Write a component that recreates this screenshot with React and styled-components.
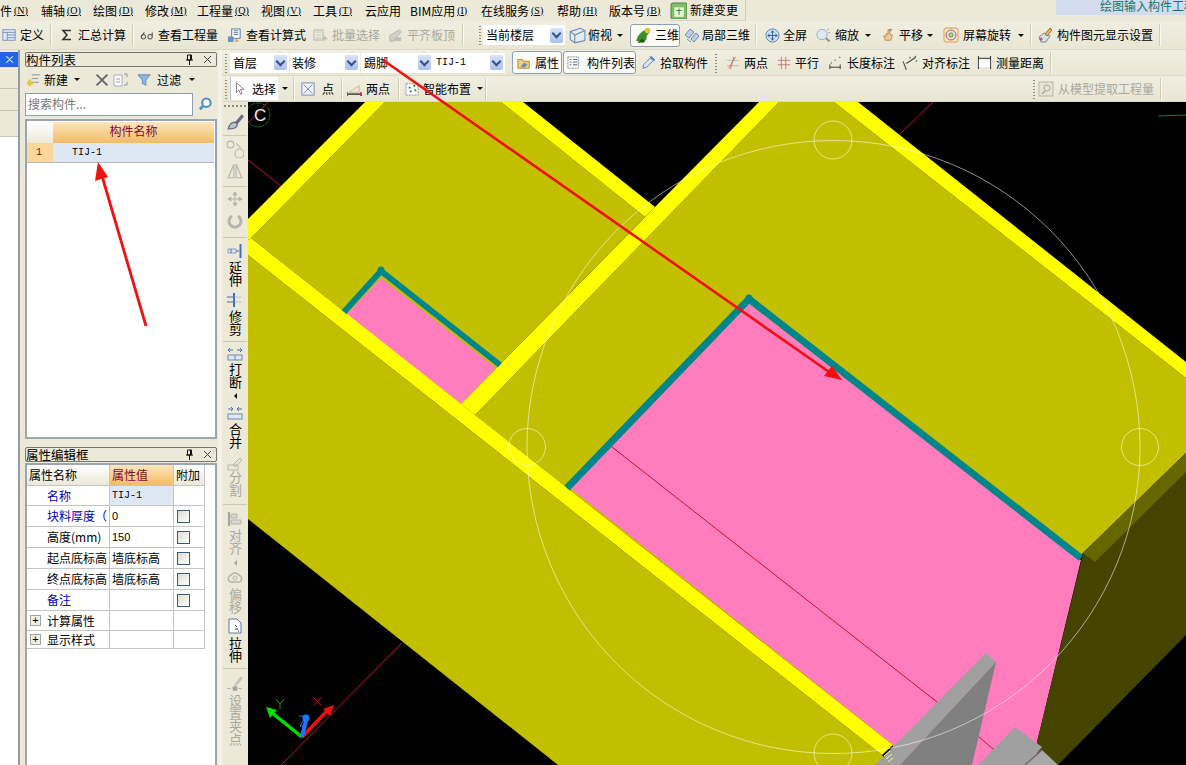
import { Fragment } from "react";
import styled, { createGlobalStyle } from "styled-components";

const GlobalStyle = createGlobalStyle`
  html, body {
    margin: 0;
    padding: 0;
    background: #ece9d8;
    overflow: hidden;
  }
  * { box-sizing: border-box; }
`;

const Page = styled.div`
  position: relative;
  width: 1186px;
  height: 765px;
  overflow: hidden;
  background: #ece9d8;
  color: #000;
  font: 12px/16px "Noto Sans CJK SC", "Liberation Sans", sans-serif;
  white-space: nowrap;
`;
const MenuBar = styled.div`
  height: 21px;
  display: flex;
  align-items: center;
  background: #ece9d8;
`;
const MenuItem = styled.div`
  width: ${p => p.$w}px;
  flex: none;
  display: flex;
  align-items: center;
  height: 19px;
  & u {
    font-size: 10px;
    margin-left: 2px;
    font-family: "Liberation Serif", serif;
  }
`;
const ChangeBtn = styled.div`
  width: 76px;
  height: 21px;
  display: flex;
  align-items: center;
  gap: 3px;
  border-right: 1px solid #cfccb8;
  border-bottom: 1px solid #d8d5c2;
`;
const TitleHint = styled.div`
  margin-left: auto;
  width: 130px;
  height: 15px;
  align-self: flex-start;
  background: #d3dcee;
  color: #0c7a6a;
  padding-left: 44px;
  line-height: 11px;
  overflow: hidden;
`;
const ToolRow = styled.div`
  height: ${p => p.$h || 26}px;
  display: flex;
  align-items: center;
  background: linear-gradient(#f0eee0, #e9e6d4);
  border-bottom: 1px solid #dcd9c6;
`;
const Tool = styled.div`
  width: ${p => p.$w}px;
  flex: none;
  height: 23px;
  display: flex;
  align-items: center;
  padding-left: ${p => p.$pl || 4}px;
  gap: ${p => p.$gap || 4}px;
  color: ${p => (p.$off ? "#a9a8a0" : "#000")};
  & svg { flex: none; }
`;
const ToggleTool = styled(Tool)`
  background: #fbfaf4;
  border: 1px solid #8ba0b4;
  border-radius: 3px;
`;
const WhiteTool = styled(Tool)`
  background: #fff;
  border-left: 1px solid #b8c4d0;
`;
const Caret = styled.i`
  width: 0;
  height: 0;
  margin-left: auto;
  margin-right: ${p => p.$mr || 6}px;
  border-left: 3px solid transparent;
  border-right: 3px solid transparent;
  border-top: 3px solid #111;
`;
const InlineCaret = styled.i`
  width: 0;
  height: 0;
  margin-left: ${p => p.$ml ?? 3}px;
  border-left: 3px solid transparent;
  border-right: 3px solid transparent;
  border-top: 3px solid #111;
`;
const Sep = styled.div`
  width: 2px;
  height: 22px;
  flex: none;
  border-left: 1px solid #cfccb8;
  border-right: 1px solid #fbfaf2;
`;
const Grip = styled.div`
  width: ${p => p.$w || 8}px;
  height: 20px;
  flex: none;
  background: radial-gradient(circle, #8d8b7c 0.8px, transparent 1px) 2px 0 / 4px 3px repeat-y;
`;
const Spacer = styled.div`
  width: ${p => p.$w}px;
  flex: none;
`;
const PanelGap = styled.div`
  height: 8px;
  flex: none;
`;
const Combo = styled.div`
  width: ${p => p.$w}px;
  height: 20px;
  flex: none;
  margin-right: ${p => p.$mr || 0}px;
  background: #fff;
  display: flex;
  align-items: center;
  padding-left: ${p => p.$pl || 3}px;
  position: relative;
  font-family: ${p => (p.$mono ? '"Liberation Mono", monospace' : "inherit")};
  font-size: ${p => (p.$mono ? "10px" : "12px")};
`;
const ComboArrow = styled.span`
  margin-left: auto;
  margin-right: 2px;
  width: 13px;
  height: 15px;
  border-radius: 2px;
  background: linear-gradient(#d9e4f8, #a9bfea);
  display: flex;
  align-items: center;
  justify-content: center;
  &::after {
    content: "";
    width: 5px;
    height: 5px;
    margin-top: -3px;
    border-right: 2px solid #37508c;
    border-bottom: 2px solid #37508c;
    transform: rotate(45deg);
  }
`;
const Body = styled.div`
  height: 715px;
  display: flex;
`;
const LeftStrip = styled.div`
  width: 20px;
  flex: none;
  padding-top: 2px;
  border-right: 2px solid #8f9ea8;
  display: flex;
  flex-direction: column;
`;
const StripTab = styled.div`
  height: 15px;
  background: #1f66e0;
  color: #fff;
  font-size: 11px;
  line-height: 14px;
  text-align: right;
  padding-right: 3px;
`;
const StripRow = styled.div`
  height: ${p => p.$h}px;
  border-bottom: 1px solid #c9c6b2;
`;
const StripFill = styled.div`
  flex: 1;
  background: #fff;
`;
const Side = styled.div`
  width: 194px;
  flex: none;
  margin-left: 4px;
  padding: 2px 0 0 0;
  display: flex;
  flex-direction: column;
`;
const PanelTitle = styled.div`
  height: 15px;
  flex: none;
  display: flex;
  align-items: center;
  margin-left: 1px;
  margin-right: 1px;
  border: 1px solid #77786c;
  border-radius: 2px;
  font-size: 12.5px;
  padding-right: 4px;
`;
const TitleBtn = styled.span`
  margin-left: ${p => (p.$first ? "auto" : "9px")};
  width: 9px;
  display: flex;
  justify-content: center;
`;
const MiniBar = styled.div`
  height: 25px;
  flex: none;
  display: flex;
  align-items: center;
`;
const SearchRow = styled.div`
  height: 25px;
  flex: none;
  display: flex;
  align-items: center;
  gap: 5px;
`;
const SearchBox = styled.div`
  width: 168px;
  height: 23px;
  margin-left: 1px;
  background: #fff;
  border: 1px solid #8ea0ae;
  color: #777;
  padding-left: 2px;
  line-height: 20px;
`;
const ListFrame = styled.div`
  height: 320px;
  flex: none;
  margin: 2px 1px 0 1px;
  border: 2px solid #9aa7b0;
  background: #fff;
  padding: 1px 1px 0 0;
`;
const ListHead = styled.div`
  display: grid;
  grid-template-columns: 26px 1fr;
  height: 21px;
`;
const CornerCell = styled.div`
  background: linear-gradient(#fff, #ece9d8);
`;
const OrangeHead = styled.div`
  background: linear-gradient(#fbe6bd, #f5bb66);
  color: #7c0a2e;
  text-align: center;
  line-height: 18px;
  font-size: 12px;
`;
const ListRow = styled.div`
  display: grid;
  grid-template-columns: 26px 1fr;
  height: 20px;
  border-bottom: 1px solid #b4b8ba;
`;
const IndexCell = styled.div`
  background: #fbd79c;
  color: #7c0a2e;
  font: 10px/19px "Liberation Mono", monospace;
  padding-left: 9px;
`;
const NameCell = styled.div`
  background: #dee8f5;
  font: 10px/19px "Liberation Mono", monospace;
  padding-left: 19px;
`;
const PropFrame = styled.div`
  flex: 1;
  margin: 1px 1px 0 1px;
  border-left: 2px solid #9aa7b0;
  border-right: 2px solid #9aa7b0;
  border-top: 2px solid #9aa7b0;
  background: #fff;
`;
const PropGrid = styled.div`
  width: 178px;
  display: grid;
  grid-template-columns: 83px 64px 31px;
`;
const fontFor = kind => {
  if (kind === "mono") return '10px "Liberation Mono", monospace';
  if (kind === "num") return '11px "Liberation Sans", sans-serif';
  return 'inherit';
};
const Cell = styled.div`
  height: ${p => p.$h || 21}px;
  border-bottom: 1px solid #c4c4c0;
  border-right: 1px solid #c4c4c0;
  display: flex;
  align-items: center;
  padding-left: ${p => p.$pl || 2}px;
  color: ${p => p.$color || "#000"};
  background: ${p => p.$bg || "transparent"};
  font: ${p => fontFor(p.$font)};
`;
const HeadCell = styled(Cell)`
  background: linear-gradient(#fff, #ece9d8);
`;
const HeadValue = styled(Cell)`
  background: linear-gradient(#fbe6bd, #f5bb66);
  color: #7c0a2e;
`;
const Check = styled.span`
  width: 13px;
  height: 13px;
  margin-left: 1px;
  border: 1px solid #2f5f80;
  background: linear-gradient(135deg, #dcdcd2, #fff);
`;
const Plus = styled.span`
  width: 11px;
  height: 11px;
  margin-right: 6px;
  border: 1px solid #a5a5a0;
  background: #f1efe4;
  font: 11px/9px "Liberation Sans", sans-serif;
  text-align: center;
`;
const Gutter = styled.div`
  width: 4px;
  flex: none;
  background: #f4f2e8;
`;
const Work = styled.div`
  flex: 1;
  display: flex;
  flex-direction: column;
  min-width: 0;
`;
const Stage = styled.div`
  height: 663px;
  display: flex;
`;
const VBar = styled.div`
  width: 26px;
  flex: none;
  display: flex;
  flex-direction: column;
  align-items: center;
  background: #ece9d8;
`;
const VGrip = styled.div`
  width: 24px;
  height: 8px;
  flex: none;
  background: radial-gradient(circle, #8d8b7c 0.8px, transparent 1px) 0 2px / 4px 4px repeat-x;
`;
const VIcon = styled.div`
  height: ${p => p.$h}px;
  margin-top: ${p => p.$mt || 0}px;
  flex: none;
  display: flex;
  align-items: center;
  justify-content: center;
`;
const VSep = styled.div`
  width: 24px;
  height: 1px;
  flex: none;
  background: #cbc8b5;
  margin: ${p => p.$t || 3}px 0 ${p => p.$b || 2}px;
`;
const VLabel = styled.div`
  writing-mode: vertical-rl;
  text-orientation: upright;
  font-size: 13px;
  line-height: 16px;
  height: ${p => p.$h || 25}px;
  flex: none;
  margin-top: -1px;
  margin-bottom: 1px;
  color: ${p => (p.$off ? "#a9a8a0" : "#000")};
`;
const VCaret = styled.i`
  height: ${p => p.$h}px;
  flex: none;
  display: flex;
  align-items: flex-start;
  &::after {
    content: "";
    margin-top: 1px;
    border-top: 3px solid transparent;
    border-bottom: 3px solid transparent;
    border-right: 3px solid ${p => (p.$off ? "#a9a8a0" : "#111")};
  }
`;
const Canvas = styled.svg`
  display: block;
  width: 938px;
  height: 663px;
  flex: none;
  background: #000;
`;
const Overlay = styled.svg`
  position: absolute;
  left: 0;
  top: 0;
  width: 1186px;
  height: 765px;
  pointer-events: none;
`;

const Box = ({ size = 16, children }) => (
  <svg width={size} height={size} viewBox="0 0 16 16">
    {children}
  </svg>
);

const GridIco = () => (
  <Box size={14}>
    <rect x="1" y="2" width="14" height="12" fill="#dfe8f5" stroke="#6f8fb5" />
    <path d="M1 5h14M6 5v9M6 8h9M6 11h9" stroke="#6f8fb5" />
  </Box>
);
const Sigma = () => (
  <svg width="14" height="14" viewBox="0 0 14 14">
    <path d="M11 2.5H3l4 4.5-4 4.5h8" fill="none" stroke="#333" strokeWidth="1.6" />
  </svg>
);
const Glasses = () => (
  <Box size={14}>
    <path d="M1.5 10a2.5 2.5 0 1 0 5 0 2.5 2.5 0 1 0-5 0zM1.5 10L5 5M9 10a2.5 2.5 0 1 0 5 0 2.5 2.5 0 1 0-5 0zM14 10V5" fill="none" stroke="#555" strokeWidth="1.2" />
  </Box>
);
const CalcIco = () => (
  <Box size={15}>
    <rect x="5" y="1" width="9" height="10" fill="#fff" stroke="#4d78ad" />
    <path d="M7 3h5M7 5h5M7 7h5" stroke="#4d78ad" />
    <rect x="1" y="9" width="6" height="6" fill="#6f93c3" />
    <path d="M9 11l4 3-4 1z" fill="#e39b3c" />
  </Box>
);
const BatchIco = () => (
  <Box>
    <rect x="1" y="3" width="9" height="10" fill="none" stroke="#b5b5ad" />
    <path d="M3 5h5M3 8h5M3 11h5" stroke="#c5c5bd" />
    <path d="M10 8l5 4-3 .5-1 2.5z" fill="#bdbdb5" />
  </Box>
);
const LevelIco = () => (
  <Box size={15}>
    <path d="M2 8l10-6 2 2-8 10H2z" fill="#d0d0c8" stroke="#b5b5ad" />
    <rect x="7" y="10" width="7" height="4" fill="#bdbdb5" />
  </Box>
);
const CubeIco = () => (
  <Box size={18}>
    <path d="M2 5l9-3 4 2v9l-9 2-4-3z" fill="#e4edf6" stroke="#6d8eae" />
    <path d="M2 5l4 3 9-4M6 8v7" fill="none" stroke="#6d8eae" />
  </Box>
);
const ThreeDIco = () => (
  <Box size={18}>
    <path d="M2 13c2-6 5-9 10-10l2 3c-2 1-3 3-3 6l-3 3z" fill="#3d8f2b" />
    <circle cx="12" cy="4" r="2.5" fill="#e4c437" />
    <path d="M3 15l4-4 3 3z" fill="#1e5c16" />
  </Box>
);
const LocalIco = () => (
  <Box>
    <path d="M1 8l5-6 4 3-5 6zM7 12l5-6 3 3-5 6z" fill="#bcd0e6" stroke="#6d8eae" />
    <path d="M3 12l4 3" stroke="#6d8eae" />
  </Box>
);
const FullIco = () => (
  <Box size={15}>
    <circle cx="8" cy="8" r="7" fill="#cfe0f3" stroke="#5b82ae" />
    <path d="M8 3v10M3 8h10M8 3L6.5 5M8 3l1.5 2M8 13l-1.5-2M8 13l1.5-2M3 8l2-1.5M3 8l2 1.5M13 8l-2-1.5M13 8l-2 1.5" stroke="#2e5f96" fill="none" />
  </Box>
);
const ZoomIco = () => (
  <Box size={15}>
    <circle cx="6.5" cy="7" r="5.5" fill="#dde8f5" stroke="#95abc2" />
    <path d="M10.5 11l4 3" stroke="#8a8a80" strokeWidth="2" />
    <path d="M12 2l2-1M13 5h2" stroke="#9a9a90" />
  </Box>
);
const HandIco = () => (
  <Box size={14}>
    <path d="M3 9l2 5h6l2-6-3-1V2H8v5L6 6v3z" fill="#f0c890" stroke="#b58a50" />
    <path d="M11 1v3M9.5 2.5L11 1l1.5 1.5" stroke="#777" fill="none" />
  </Box>
);
const SpinIco = () => (
  <Box>
    <rect x="1" y="1" width="14" height="14" rx="2" fill="#fbe9c9" stroke="#d89b59" />
    <circle cx="8" cy="8" r="5" fill="#d7e6f4" stroke="#c65a5a" />
    <circle cx="8" cy="8" r="2" fill="#e9d56a" stroke="#6a8a3a" />
  </Box>
);
const GemIco = () => (
  <Box>
    <path d="M2 10l5-4 6 3-4 6H4z" fill="#d5dde6" stroke="#7b8794" />
    <path d="M8 7l5-6 2 2-5 6z" fill="#e7b45c" stroke="#99753a" />
    <circle cx="4" cy="12" r="1.5" fill="#c55" />
  </Box>
);
const PropIco = () => (
  <Box size={14}>
    <path d="M1 4h5l1 2h7v8H1z" fill="#f0cf78" stroke="#a8843a" />
    <path d="M4 12l4-4 4 1-3 4z" fill="#6a8fbc" />
  </Box>
);
const ListIco = () => (
  <Box size={14}>
    <rect x="1" y="1" width="12" height="13" fill="none" stroke="#7a8a9a" strokeDasharray="2 1" />
    <path d="M3 4h2M3 7h2M3 10h2M7 4h5M7 7h5M7 10h5" stroke="#36597f" />
  </Box>
);
const DropIco = () => (
  <Box size={15}>
    <path d="M2 14l1-4 7-7 3 3-7 7z" fill="#dbe8f6" stroke="#5b82ae" />
    <path d="M9 2l2-1 4 4-1 2z" fill="#5b82ae" />
  </Box>
);
const CrossIco = () => (
  <Box size={14}>
    <path d="M1 5h14M1 11h14" stroke="#b8b8ae" />
    <path d="M5 15L9 1M3 14l8-13" stroke="#c77070" />
  </Box>
);
const ParaIco = () => (
  <Box size={14}>
    <path d="M1 5h14M1 10h14M5 1v14M10 1v14" stroke="#c77070" />
  </Box>
);
const LenIco = () => (
  <Box size={15}>
    <path d="M2 10v5M13 10v5M2 13h11" stroke="#333" />
    <path d="M3 9l1-1M7 6l1-1M12 3l1-1" stroke="#5d8a5d" strokeWidth="1.5" />
  </Box>
);
const AlignDimIco = () => (
  <Box size={17}>
    <path d="M2 7l3 8M5 9l9-6" stroke="#444" fill="none" />
    <path d="M8 4l1-1M13 2l1 1M14 6l1 1" stroke="#5d8a5d" strokeWidth="1.5" />
  </Box>
);
const RulerIco = () => (
  <Box size={15}>
    <path d="M1.5 1v14M14.5 1v14" stroke="#222" />
    <rect x="2" y="5" width="12" height="8" fill="#fff" />
    <path d="M2 3.5h12" stroke="#222" />
  </Box>
);
const PointerIco = () => (
  <Box size={13}>
    <path d="M3 1v12l3-3 2 5 2-1-2-5h4z" fill="#fff" stroke="#667" />
  </Box>
);
const PointIco = () => (
  <Box size={14}>
    <rect x="1" y="1" width="14" height="14" fill="#eef2fa" stroke="#7084b0" />
    <path d="M3 3l10 10M13 3L3 13" stroke="#7084b0" />
  </Box>
);
const SegIco = () => (
  <Box size={15}>
    <path d="M2 12L13 5v7z" fill="#f3e6d2" stroke="#c9b79c" />
    <path d="M0 14h15" stroke="#333" strokeWidth="1.5" />
    <path d="M0 12v4M15 12v4" stroke="#b33" strokeWidth="2" />
  </Box>
);
const SmartIco = () => (
  <Box size={15}>
    <rect x="1" y="3" width="13" height="12" fill="#fff" stroke="#888" strokeDasharray="2 1" />
    <path d="M4 7h2M9 5h2M5 11h2M10 10h2" stroke="#2f7a3a" strokeWidth="2" />
  </Box>
);
const ExtractIco = () => (
  <Box>
    <rect x="1" y="1" width="14" height="14" fill="#e6e3d4" stroke="#b7b5a9" />
    <circle cx="9" cy="7" r="3" fill="none" stroke="#aaa89c" />
    <path d="M7 10l-3 3" stroke="#aaa89c" strokeWidth="1.5" />
  </Box>
);
const NewIco = () => (
  <Box size={15}>
    <path d="M6 3h9M6 7h7M6 11h8" stroke="#7f93ad" />
    <path d="M4 8v7M1 11.5h7" stroke="#e7c34d" strokeWidth="3" />
  </Box>
);
const CopyIco = () => (
  <Box>
    <path d="M1 3h8v11H1z" fill="#fff" stroke="#aab" />
    <path d="M11 2h3v3M11 13h3v-3M3 7h4M3 10h4" stroke="#8a97a8" fill="none" />
  </Box>
);
const FilterIco = () => (
  <Box size={14}>
    <path d="M0 2h14L9 8v6L5 12V8z" fill="#8fb6e0" stroke="#5b82ae" />
  </Box>
);
const SearchIco = () => (
  <Box size={15}>
    <circle cx="9" cy="6" r="4.5" fill="#fff" stroke="#4b8fc9" strokeWidth="2.2" />
    <path d="M5.5 9.5L2 13" stroke="#4b8fc9" strokeWidth="3" />
  </Box>
);
const PinIco = () => (
  <svg width="9" height="11" viewBox="0 0 9 11">
    <path d="M2.5 1h4v5h-4zM1 6h7M4.5 6v5M5.5 1v5" stroke="#111" fill="none" />
  </svg>
);
const CloseIco = ({ size = 9, color = "#444", width = 1 }) => (
  <svg width={size} height={size} viewBox="0 0 9 9">
    <path d="M1 1l7 7M8 1L1 8" stroke={color} strokeWidth={width} />
  </svg>
);
const BookIco = () => (
  <Box size={17}>
    <rect x="1" y="1" width="15" height="15" rx="2" fill="#7fbf6a" stroke="#4d8a3e" />
    <rect x="4" y="5" width="9" height="9" fill="#e6f3d8" />
    <path d="M6 8h5M8.5 6v6" stroke="#3f8a3a" />
  </Box>
);

const BrushV = () => (
  <Box size={18}>
    <path d="M2 15c1-4 3-6 6-6l2 2c0 3-3 4-8 4z" fill="#b9c3dc" stroke="#667" />
    <path d="M8 9l6-7 2 2-6 7z" fill="#6a6a8a" />
  </Box>
);
const ScatterV = () => (
  <Box size={18}>
    <circle cx="4" cy="4" r="3" fill="none" stroke="#b5b5ad" />
    <circle cx="12" cy="12" r="4" fill="none" stroke="#b5b5ad" />
    <path d="M9 3l4 4" stroke="#b5b5ad" />
  </Box>
);
const MirrorV = () => (
  <Box size={18}>
    <path d="M7 2L2 14h5zM9 2l5 12H9z" fill="none" stroke="#b5b5ad" />
  </Box>
);
const MoveV = () => (
  <Box size={16}>
    <path d="M8 1v14M1 8h14M8 1L6 4h4zM8 15l-2-3h4zM1 8l3-2v4zM15 8l-3-2v4z" fill="#b5b5ad" stroke="#b5b5ad" />
  </Box>
);
const RotateV = () => (
  <Box size={16}>
    <path d="M5 3a6 6 0 1 0 6 0" fill="none" stroke="#b5b5ad" strokeWidth="3" />
  </Box>
);
const ExtendV = () => (
  <Box size={16}>
    <path d="M13.5 1v14" stroke="#4570b5" strokeWidth="2" />
    <path d="M1 6h8v4H1z" fill="#dfe7f3" stroke="#8aa0c0" />
    <path d="M4 6v4M9 8h3" stroke="#4570b5" />
  </Box>
);
const TrimV = () => (
  <Box size={16}>
    <path d="M7 1v14" stroke="#4570b5" strokeWidth="2" />
    <path d="M0 5h6M0 10h6" stroke="#4570b5" />
    <path d="M9 5h6M9 10h6" stroke="#a8b5cc" strokeDasharray="2 1" />
  </Box>
);
const BreakV = () => (
  <Box size={16}>
    <path d="M1 4h5M15 4h-5M1 4l2-2M1 4l2 2M15 4l-2-2M15 4l-2 2" stroke="#4570b5" fill="none" />
    <rect x="1" y="9" width="14" height="5" fill="#dfe7f3" stroke="#6c8ab5" />
    <path d="M8 9v5" stroke="#6c8ab5" />
  </Box>
);
const MergeV = () => (
  <Box size={16}>
    <path d="M1 4h5M15 4h-5M6 4L4 2M6 4L4 6M10 4l2-2M10 4l2 2" stroke="#4570b5" fill="none" />
    <rect x="1" y="9" width="14" height="5" fill="#dfe7f3" stroke="#6c8ab5" />
  </Box>
);
const SplitV = () => (
  <Box size={16}>
    <path d="M1 9h10v5H1zM6 9l7-7 2 2-7 7z" fill="none" stroke="#b5b5ad" />
  </Box>
);
const AlignV = () => (
  <Box size={16}>
    <path d="M2 1v14" stroke="#a5a59d" strokeWidth="2" />
    <path d="M4 3h6v4H4zM4 9h10v4H4z" fill="#d8d8d0" stroke="#b5b5ad" />
  </Box>
);
const OffsetV = () => (
  <Box size={16}>
    <path d="M3 13a4 4 0 0 1 1-7 5 5 0 0 1 8 0 4 4 0 0 1 1 7z" fill="none" stroke="#b5b5ad" strokeWidth="1.5" />
    <circle cx="8" cy="9" r="2" fill="none" stroke="#b5b5ad" />
  </Box>
);
const StretchV = () => (
  <Box size={16}>
    <path d="M2 1h8l4 4v10H2z" fill="#fff" stroke="#5c7ca8" />
    <path d="M8 7l2 2M8 11h3M11 13h1" stroke="#333" />
  </Box>
);
const GripV = () => (
  <Box size={18}>
    <path d="M1 12h14" stroke="#b5b5ad" strokeDasharray="3 2" />
    <rect x="6" y="10" width="4" height="4" fill="#a5a59d" />
    <path d="M7 9l6-8 2 2-6 7z" fill="#c5c5bd" />
  </Box>
);

const menus = [
  ["件", "N", 41],
  ["辅轴", "O", 52],
  ["绘图", "D", 52],
  ["修改", "M", 52],
  ["工程量", "Q", 64],
  ["视图", "V", 52],
  ["工具", "T", 52],
  ["云应用", "", 45],
  ["BIM应用", "I", 71],
  ["在线服务", "S", 76],
  ["帮助", "H", 52],
  ["版本号", "B", 61],
];

const props = [
  { name: "名称", color: "#0000b0", value: "TIJ-1", font: "mono", bg: "#dee8f5", h: 20 },
  { name: "块料厚度（", color: "#0000b0", value: "0", font: "num", check: true },
  { name: "高度(mm)", value: "150", font: "num", check: true },
  { name: "起点底标高", value: "墙底标高", check: true },
  { name: "终点底标高", value: "墙底标高", check: true },
  { name: "备注", color: "#0000b0", value: "", check: true },
];

// scene coordinates are the screen coordinates of the photographed page
const Scene = () => (
  <Canvas viewBox="248 102 938 663">
    <polygon points="251,238 385,102 501,102 645,217 461,404" fill="#c2bf00" />
    <polygon points="475,415 779,102 834,102 1186,378 1186,453 1083,553 893,745" fill="#c2bf00" />
    <polygon points="248,255 882,755 888,765 558,765 248,519" fill="#c2bf00" />

    <polygon points="748,303 1081,560 1037,742 1037,765 895,765 893,745 570,488" fill="#ff7dbd" />
    <polygon points="381,278 496,368 461,404 346,315" fill="#ff7dbd" />

    <polygon points="248,219 365,102 385,102 251,238 248,240" fill="#ffff00" />
    <polygon points="501,102 523,102 655,207 645,217" fill="#ffff00" />
    <polygon points="655,207 759,102 779,102 475,415 461,404" fill="#ffff00" />
    <polygon points="834,102 858,102 1186,362 1186,378" fill="#ffff00" />
    <polygon points="248,240 251,238 893,745 882,755 248,255" fill="#ffff00" />

    <polyline points="344,312 381,271 500,365" fill="none" stroke="#00868a" strokeWidth="6" />
    <polyline points="567,488 749,299 1081,558" fill="none" stroke="#00868a" strokeWidth="7" />
    <circle cx="381" cy="270" r="3.5" fill="#00868a" />
    <circle cx="749" cy="298" r="3.5" fill="#00868a" />

    <polygon points="1083,553 1186,453 1186,635 1058,765 1037,765 1037,742 1081,562" fill="#444400" />
    <polygon points="1083,553 1186,453 1186,472 1095,562" fill="#666600" />

    <g fill="none" stroke="#c8102e" strokeWidth="1">
      <line x1="612" y1="447" x2="937" y2="702" />
      <line x1="978" y1="736" x2="1000" y2="755" />
      <line x1="402" y1="643" x2="281" y2="765" />
      <line x1="248" y1="160" x2="281" y2="186" />
      <line x1="268" y1="102" x2="248" y2="123" />
      <line x1="933" y1="102" x2="899" y2="135" />
    </g>

    <polygon points="986,653 996,662 900,765 875,765" fill="#a0a0a0" />
    <polygon points="996,662 972,765 900,765" fill="#808080" />
    <polygon points="1015,727 1042,747 1027,765 978,765" fill="#a0a0a0" />
    <polygon points="1042,750 1058,765 1027,765" fill="#a8a8a8" />
    <line x1="1042" y1="750" x2="1025" y2="765" stroke="#707070" strokeWidth="1.5" />

    <g fill="none" stroke="#fff" strokeOpacity="0.55" strokeWidth="1">
      <circle cx="833.5" cy="447" r="306.5" />
      <circle cx="833" cy="140" r="19" />
      <circle cx="527" cy="447" r="18.5" />
      <circle cx="1140" cy="447" r="18.5" />
      <circle cx="833" cy="753" r="19" />
    </g>
    <path d="M884 756l6-5M886 759l6-5M888 762l5-4" stroke="#ffff80" strokeWidth="1" />

    <circle cx="258" cy="115" r="12" fill="none" stroke="#0c6a34" strokeWidth="1" strokeDasharray="5 1" />
    <text x="254" y="121" fill="#eee" fontSize="17" fontFamily="Liberation Sans, sans-serif">C</text>
    <line x1="1158" y1="116" x2="1186" y2="115" stroke="#0c7a40" />

    <line x1="302" y1="737" x2="271" y2="712" stroke="#00e000" strokeWidth="3.5" />
    <polygon points="266,707 277,710 270,718" fill="#00e000" />
    <line x1="302" y1="737" x2="328" y2="710" stroke="#f01010" strokeWidth="3.5" />
    <polygon points="334,705 330,716 323,709" fill="#f01010" />
    <line x1="302" y1="737" x2="306" y2="720" stroke="#1e78ff" strokeWidth="4" />
    <circle cx="306" cy="718" r="3.5" fill="#1e78ff" />
    <path d="M299 716h7l-6 10h6" fill="none" stroke="#1e78ff" />
    <path d="M276 699l4 5 4-5M280 704v5" fill="none" stroke="#1f9a2f" />
    <path d="M313 697l9 9M322 697l-9 9" fill="none" stroke="#a01818" />
  </Canvas>
);

const App = () => {
  return (
    <>
      <GlobalStyle />
      <Page>
        <MenuBar>
          {menus.map(([label, key, w]) => (
            <MenuItem key={label} $w={w}>
              {label}
              {key && <u>({key})</u>}
            </MenuItem>
          ))}
          <ChangeBtn>
            <BookIco />
            新建变更
          </ChangeBtn>
          <TitleHint>绘图输入构件工程</TitleHint>
        </MenuBar>

        <ToolRow $h={29}>
          <Tool $w={50} $pl={2}><GridIco />定义</Tool>
          <Sep />
          <Tool $w={80} $pl={8}><Sigma />汇总计算</Tool>
          <Sep />
          <Tool $w={90} $pl={6}><Glasses />查看工程量</Tool>
          <Tool $w={86} $pl={3}><CalcIco />查看计算式</Tool>
          <Tool $w={75} $pl={3} $gap={3} $off><BatchIco />批量选择</Tool>
          <Tool $w={77} $pl={3} $off><LevelIco />平齐板顶</Tool>
          <Sep />
          <Spacer $w={12} />
          <Grip $w={7} />
          <Combo $w={82}>当前楼层<ComboArrow /></Combo>
          <Tool $w={64} $pl={3} $gap={2}><CubeIco />俯视<Caret /></Tool>
          <Spacer $w={1} />
          <ToggleTool $w={50} $pl={3} $gap={3}><ThreeDIco />三维</ToggleTool>
          <Spacer $w={1} />
          <Tool $w={74} $pl={3} $gap={2}><LocalIco />局部三维</Tool>
          <Sep />
          <Spacer $w={2} />
          <Tool $w={52} $pl={6} $gap={3}><FullIco />全屏</Tool>
          <Tool $w={66} $pl={5}><ZoomIco />缩放<Caret /></Tool>
          <Tool $w={62} $pl={4}><HandIco />平移<Caret /></Tool>
          <Tool $w={91} $pl={4}><SpinIco />屏幕旋转<Caret /></Tool>
          <Sep />
          <Tool $w={127} $pl={5}><GemIco />构件图元显示设置</Tool>
          <Sep />
        </ToolRow>

        <Body>
          <LeftStrip>
            <StripTab>×</StripTab>
            <StripRow $h={22} />
            <StripRow $h={22} />
            <StripRow $h={26} />
            <StripFill />
          </LeftStrip>
          <Side>
            <PanelTitle>
              构件列表
              <TitleBtn $first><PinIco /></TitleBtn>
              <TitleBtn><CloseIco /></TitleBtn>
            </PanelTitle>
            <MiniBar>
              <Tool $w={67} $pl={2} $gap={3}><NewIco />新建<InlineCaret /></Tool>
              <Tool $w={20} $pl={0}><CloseIco size={14} color="#666" width={1.2} /></Tool>
              <Tool $w={24} $pl={2}><CopyIco /></Tool>
              <Tool $w={60} $pl={3} $gap={5}><FilterIco />过滤<InlineCaret /></Tool>
            </MiniBar>
            <SearchRow>
              <SearchBox>搜索构件...</SearchBox>
              <SearchIco />
            </SearchRow>
            <ListFrame>
              <ListHead>
                <CornerCell />
                <OrangeHead>构件名称</OrangeHead>
              </ListHead>
              <ListRow>
                <IndexCell>1</IndexCell>
                <NameCell>TIJ-1</NameCell>
              </ListRow>
            </ListFrame>
            <PanelGap />
            <PanelTitle>
              属性编辑框
              <TitleBtn $first><PinIco /></TitleBtn>
              <TitleBtn><CloseIco /></TitleBtn>
            </PanelTitle>
            <PropFrame>
              <PropGrid>
                <HeadCell>属性名称</HeadCell>
                <HeadValue $pl={2}>属性值</HeadValue>
                <HeadCell>附加</HeadCell>
                {props.map(row => (
                  <Fragment key={row.name}>
                    <Cell $pl={20} $color={row.color} $h={row.h}>{row.name}</Cell>
                    <Cell $font={row.font} $bg={row.bg} $h={row.h}>{row.value}</Cell>
                    <Cell $h={row.h}>{row.check && <Check />}</Cell>
                  </Fragment>
                ))}
                <Cell $pl={3} $h={20}><Plus>+</Plus>计算属性</Cell>
                <Cell $h={20} />
                <Cell $h={20} />
                <Cell $pl={3} $h={18}><Plus>+</Plus>显示样式</Cell>
                <Cell $h={18} />
                <Cell $h={18} />
              </PropGrid>
            </PropFrame>
          </Side>
          <Gutter />
          <Work>
            <ToolRow>
              <Grip />
              <Combo $w={59} $mr={1}>首层<ComboArrow /></Combo>
              <Combo $w={70} $pl={2} $mr={1}>装修<ComboArrow /></Combo>
              <Combo $w={72}>踢脚<ComboArrow /></Combo>
              <Combo $w={72} $mr={7} $mono>TIJ-1<ComboArrow /></Combo>
              <ToggleTool $w={50}><PropIco />属性</ToggleTool>
              <Spacer $w={1} />
              <ToggleTool $w={73} $pl={3} $gap={6}><ListIco />构件列表</ToggleTool>
              <Spacer $w={2} />
              <Tool $w={74} $pl={3}><DropIco />拾取构件</Tool>
              <Grip />
              <Tool $w={53} $pl={6}><CrossIco />两点</Tool>
              <Tool $w={52} $pl={4}><ParaIco />平行</Tool>
              <Tool $w={72} $pl={3}><LenIco />长度标注</Tool>
              <Tool $w={77} $pl={4}><AlignDimIco />对齐标注</Tool>
              <Tool $w={76} $pl={3}><RulerIco />测量距离</Tool>
              <Sep />
            </ToolRow>
            <ToolRow>
              <Grip />
              <WhiteTool $w={48} $pl={3} $gap={5}><PointerIco />选择</WhiteTool>
              <Tool $w={15} $pl={4}><InlineCaret $ml={0} /></Tool>
              <Sep />
              <Tool $w={46} $pl={6} $gap={7}><PointIco />点</Tool>
              <Sep />
              <Tool $w={55} $pl={4}><SegIco />两点</Tool>
              <Sep />
              <Tool $w={85} $pl={5} $gap={3}><SmartIco />智能布置<InlineCaret /></Tool>
              <Sep />
              <Spacer $w={543} />
              <Grip $w={6} />
              <Tool $w={124} $pl={2} $off><ExtractIco />从模型提取工程量</Tool>
              <Sep />
            </ToolRow>
            <Stage>
              <VBar>
                <VGrip />
                <VIcon $h={22}><BrushV /></VIcon>
                <VSep />
                <VIcon $h={22}><ScatterV /></VIcon>
                <VIcon $h={22}><MirrorV /></VIcon>
                <VSep $t={4} />
                <VIcon $h={20}><MoveV /></VIcon>
                <VIcon $h={24}><RotateV /></VIcon>
                <VSep $t={4} />
                <VIcon $h={22}><ExtendV /></VIcon>
                <VLabel>延伸</VLabel>
                <VIcon $h={22} $mt={2}><TrimV /></VIcon>
                <VLabel>修剪</VLabel>
                <VSep $t={5} />
                <VIcon $h={20}><BreakV /></VIcon>
                <VLabel $h={28}>打断</VLabel>
                <VCaret $h={10} />
                <VIcon $h={22}><MergeV /></VIcon>
                <VLabel>合并</VLabel>
                <VIcon $h={16} $mt={7}><SplitV /></VIcon>
                <VLabel $h={27} $off>分割</VLabel>
                <VSep $t={5} />
                <VIcon $h={23}><AlignV /></VIcon>
                <VLabel $h={29} $off>对齐</VLabel>
                <VCaret $h={6} $off />
                <VIcon $h={24}><OffsetV /></VIcon>
                <VLabel $off>偏移</VLabel>
                <VIcon $h={24}><StretchV /></VIcon>
                <VLabel>拉伸</VLabel>
                <VSep $t={5} />
                <VIcon $h={22} $mt={2}><GripV /></VIcon>
                <VLabel $h={48} $off>设置夹点</VLabel>
              </VBar>
              <Scene />
            </Stage>
          </Work>
        </Body>

        {/* hand-drawn red annotation arrows on top of the screenshot */}
        <Overlay viewBox="0 0 1186 765">
          <line x1="383" y1="60" x2="832" y2="374" stroke="#f01010" strokeWidth="2.6" />
          <polygon points="842,380 824,376 832,366" fill="#f01010" />
          <line x1="146" y1="326" x2="102" y2="176" stroke="#f01010" strokeWidth="2.8" />
          <polygon points="98,162 108,177 95,181" fill="#f01010" />
        </Overlay>
      </Page>
    </>
  );
};

export default App;
